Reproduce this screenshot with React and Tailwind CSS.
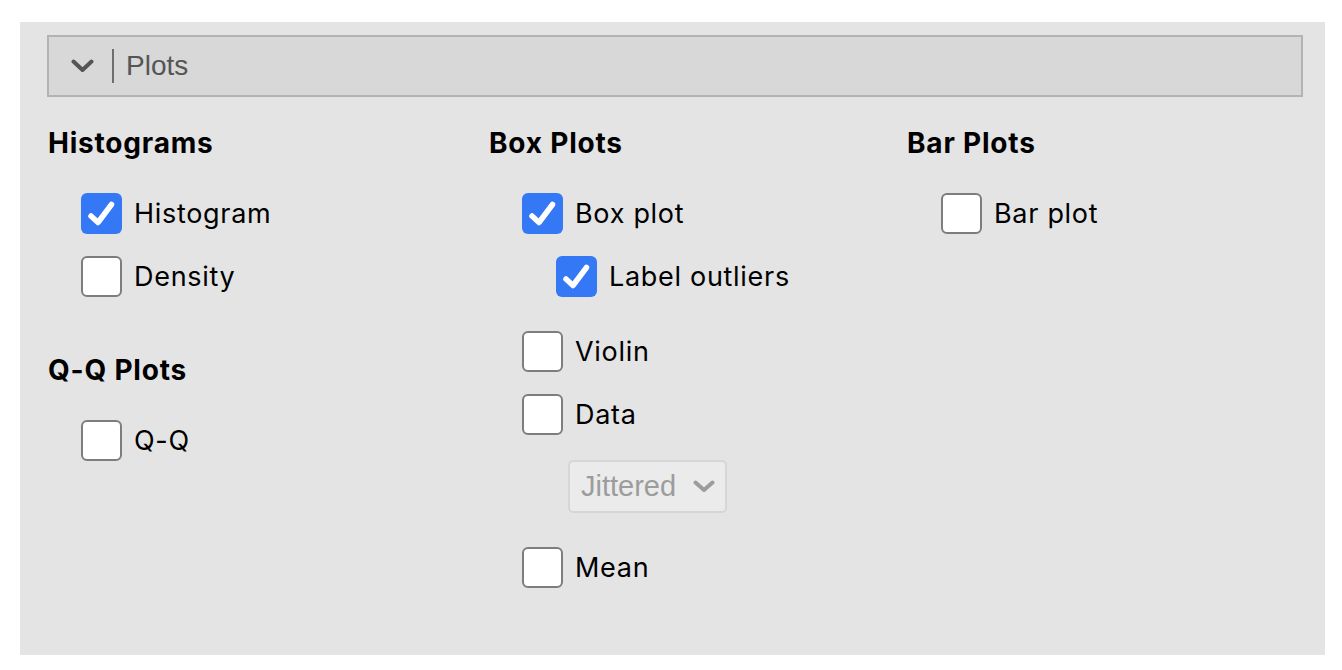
import { useState } from 'react';

const Check = () => (
    <svg width="41" height="41" viewBox="0 0 41 41" className="block">
        <path d="M10 23 L17 29.5 L30.5 11.5" fill="none" stroke="#fff" strokeWidth="5.5" strokeLinecap="round" strokeLinejoin="round" />
    </svg>
);

const CheckRow = ({ label, checked, onToggle, className = '' }) => (
    <div className={`flex items-center h-[41px] ${className}`} onClick={onToggle}>
        {checked ? (
            <div className="w-[41px] h-[41px] rounded-[6px] bg-[#3478f6] shrink-0">
                <Check />
            </div>
        ) : (
            <div className="w-[41px] h-[41px] rounded-[6px] bg-white border-2 border-[#7d7d7d] shrink-0"></div>
        )}
        <span className="ml-[12px] text-[27px] tracking-[0.7px] text-black leading-none">{label}</span>
    </div>
);

const Heading = ({ children, className = '' }) => (
    <h3 className={`text-[28px] tracking-[0.8px] font-bold text-black leading-[34px] ${className}`}>{children}</h3>
);

const App = () => {
    const [opts, setOpts] = useState({
        histogram: true,
        density: false,
        qq: false,
        boxplot: true,
        outliers: true,
        violin: false,
        data: false,
        mean: false,
        barplot: false,
    });
    const toggle = (k) => () => setOpts((o) => ({ ...o, [k]: !o[k] }));

    return (
        <div className="bg-white w-[1342px] h-[670px] pt-[22px] pl-[20px]" style={{ fontFamily: 'Inter, "Noto Sans", sans-serif' }}>
            <div className="bg-[#e4e4e4] w-[1305px] h-[633px] pt-[13px]">
                {/* Section header */}
                <div className="ml-[27px] w-[1256px] h-[62px] bg-[#d8d8d8] border-2 border-[#b3b3b3] flex items-center">
                    <svg width="23" height="14" viewBox="0 0 23 14" className="ml-[22px]">
                        <path d="M2.5 2.5 L11.5 11 L20.5 2.5" fill="none" stroke="#555" strokeWidth="4" strokeLinecap="round" strokeLinejoin="round" />
                    </svg>
                    <div className="ml-[18px] w-[2px] h-[34px] bg-[#6e6e6e]"></div>
                    <span className="ml-[12px] text-[28px] text-[#555] leading-none" style={{ fontFamily: '"Liberation Sans", Arial, sans-serif' }}>Plots</span>
                </div>

                <div className="flex ml-[28px] mt-[29px]">
                    {/* Histograms + Q-Q */}
                    <div className="w-[441px]">
                        <Heading>Histograms</Heading>
                        <div className="ml-[33px] mt-[33px] flex flex-col gap-[22px]">
                            <CheckRow label="Histogram" checked={opts.histogram} onToggle={toggle('histogram')} />
                            <CheckRow label="Density" checked={opts.density} onToggle={toggle('density')} />
                        </div>
                        <Heading className="mt-[56px]">Q-Q Plots</Heading>
                        <div className="ml-[33px] mt-[33px]">
                            <CheckRow label="Q-Q" checked={opts.qq} onToggle={toggle('qq')} />
                        </div>
                    </div>

                    {/* Box plots */}
                    <div className="w-[418px]">
                        <Heading>Box Plots</Heading>
                        <div className="ml-[33px] mt-[33px] flex flex-col">
                            <CheckRow label="Box plot" checked={opts.boxplot} onToggle={toggle('boxplot')} />
                            <CheckRow label="Label outliers" checked={opts.outliers} onToggle={toggle('outliers')} className="ml-[34px] mt-[22px]" />
                            <CheckRow label="Violin" checked={opts.violin} onToggle={toggle('violin')} className="mt-[34px]" />
                            <CheckRow label="Data" checked={opts.data} onToggle={toggle('data')} className="mt-[22px]" />
                            <div
                                className="ml-[46px] mt-[25px] w-[159px] h-[53px] rounded-[5px] border-2 border-[#d6d6d6] bg-[#ebebeb] flex items-center justify-between pl-[11px] pr-[10px]"
                                style={{ fontFamily: '"Liberation Sans", Arial, sans-serif' }}
                            >
                                <span className="text-[29px] text-[#9c9c9c] leading-none">Jittered</span>
                                <svg width="22" height="13" viewBox="0 0 22 13">
                                    <path d="M2.5 2.5 L11 10 L19.5 2.5" fill="none" stroke="#9c9c9c" strokeWidth="4" strokeLinecap="round" strokeLinejoin="round" />
                                </svg>
                            </div>
                            <CheckRow label="Mean" checked={opts.mean} onToggle={toggle('mean')} className="mt-[34px]" />
                        </div>
                    </div>

                    {/* Bar plots */}
                    <div>
                        <Heading>Bar Plots</Heading>
                        <div className="ml-[34px] mt-[33px]">
                            <CheckRow label="Bar plot" checked={opts.barplot} onToggle={toggle('barplot')} />
                        </div>
                    </div>
                </div>
            </div>
        </div>
    );
};

export default App;
